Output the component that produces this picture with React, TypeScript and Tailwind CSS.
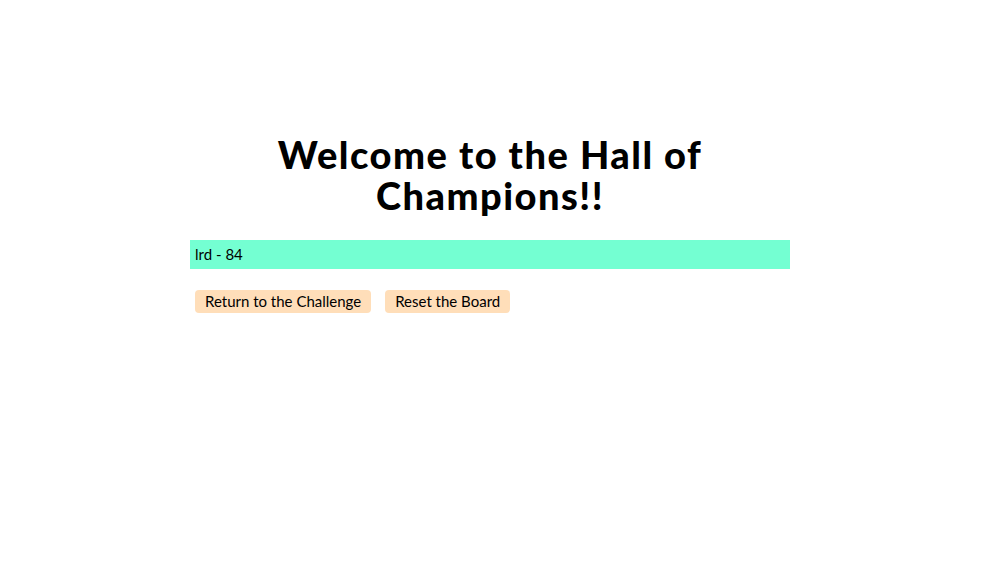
import React from 'react'

const App = () => {
  const scores = [{ name: 'lrd', score: 84 }]

  return (
    <div className="min-h-screen w-full bg-white text-black" style={{ fontFamily: 'Lato, "Open Sans", sans-serif' }}>
      <div className="w-[600px] ml-[190px] pt-[134px] flex flex-col">
        <h1 className="mx-auto w-[520px] text-center text-[38px] leading-[41px] font-black tracking-[1.5px]">
          Welcome to the Hall of Champions!!
        </h1>
        <div className="mt-[24px] flex flex-col">
          {scores.map(s => (
            <div key={s.name} className="h-[29px] bg-[#74ffd2] pl-[5px] flex items-center text-[15px]">
              {s.name} - {s.score}
            </div>
          ))}
        </div>
        <div className="mt-[21px] ml-[5px] flex gap-[14px]">
          <button className="h-[23px] px-[10px] rounded-[4px] bg-[#ffdeb9] text-[15px] leading-none">
            Return to the Challenge
          </button>
          <button className="h-[23px] px-[10px] rounded-[4px] bg-[#ffdeb9] text-[15px] leading-none">
            Reset the Board
          </button>
        </div>
      </div>
    </div>
  )
}

export default App
